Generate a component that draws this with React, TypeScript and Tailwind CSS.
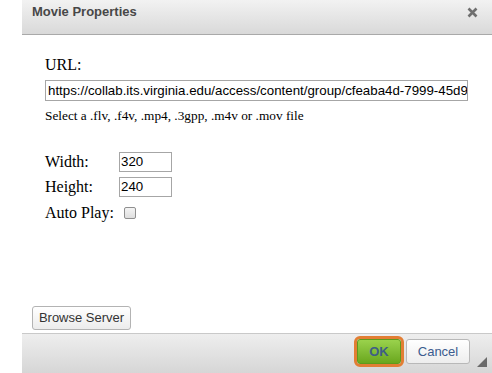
import React from "react";

export default function App() {
  const arial = { fontFamily: '"Liberation Sans", Arial, sans-serif' };
  const serif = { fontFamily: '"Liberation Serif", "Times New Roman", serif' };
  return (
    <div className="flex h-[373px] w-[492px] overflow-hidden bg-white">
      <div className="w-[22px] shrink-0" />
      <div className="flex flex-1 flex-col">
        <div
          className="flex h-[35px] shrink-0 items-start justify-between border-b border-[#a9a9a9] bg-gradient-to-b from-[#f2f2f2] to-[#d9d9d9] pl-[10px] pr-[14px] pt-[4px]"
          style={arial}
        >
          <span className="text-[13px] font-bold leading-[16px] text-[#474747]">Movie Properties</span>
          <svg width="11" height="11" viewBox="0 0 11 11" className="mt-[3px]">
            <path d="M1.5 1.5 L9.5 9.5 M9.5 1.5 L1.5 9.5" stroke="#6f6f6f" strokeWidth="2.6" strokeLinecap="butt" />
          </svg>
        </div>
        <div className="flex flex-1 flex-col pl-[10px] pt-[21px]">
          <div className="flex flex-col pl-[13px]" style={serif}>
            <div className="text-[16px] leading-[18px] text-black">URL:</div>
            <div
              className="mt-[6px] h-[21px] w-[423px] overflow-hidden whitespace-nowrap border border-[#a6a6a6] pl-[2px] text-[13.3px] leading-[19px] text-black"
              style={arial}
            >
              https://collab.its.virginia.edu/access/content/group/cfeaba4d-7999-45d9
            </div>
            <div className="mt-[7px] text-[13.3px] leading-[15px] text-black">
              Select a .flv, .f4v, .mp4, .3gpp, .m4v or .mov file
            </div>
            <div className="mt-[29px] flex h-[20px] items-center">
              <span className="w-[74px] text-[16px] leading-[18px]">Width:</span>
              <div className="h-[20px] w-[53px] border border-[#a6a6a6] pl-[1px] text-[13.3px] leading-[18px]" style={arial}>320</div>
            </div>
            <div className="mt-[5px] flex h-[20px] items-center">
              <span className="w-[74px] text-[16px] leading-[18px]">Height:</span>
              <div className="h-[20px] w-[53px] border border-[#a6a6a6] pl-[1px] text-[13.3px] leading-[18px]" style={arial}>240</div>
            </div>
            <div className="mt-[6px] flex h-[20px] items-center">
              <span className="text-[16px] leading-[18px]">Auto Play:</span>
              <div className="ml-[10px] h-[12px] w-[12px] rounded-[2px] border border-[#8f8f8f] bg-gradient-to-b from-[#f4f4f4] to-[#dedede]" />
            </div>
          </div>
          <div className="mb-[3px] mt-auto">
            <div
              className="flex h-[24px] w-[99px] items-center justify-center rounded-[3px] border border-[#b3b3b3] bg-gradient-to-b from-[#ffffff] to-[#ececec] text-[13px] text-[#333]"
              style={arial}
            >
              Browse Server
            </div>
          </div>
        </div>
        <div className="relative flex h-[40px] shrink-0 items-start justify-end border-t border-[#c9c9c9] bg-gradient-to-b from-[#eeeeee] to-[#d6d6d6] pr-[22px] pt-[2px]" style={arial}>
          <div className="flex h-[31px] items-center gap-[2px]">
            <div className="flex h-[31px] w-[50px] items-center justify-center rounded-[6px] border-[3px] border-[#e27e34]">
              <div className="flex h-full w-full items-center justify-center rounded-[3px] border border-[#5f9a1c] bg-gradient-to-b from-[#9ad24c] to-[#6aa71c] text-[13px] font-bold text-[#3e5e86]">
                OK
              </div>
            </div>
            <div className="flex h-[25px] w-[64px] items-center justify-center rounded-[3px] border border-[#b8b8b8] bg-gradient-to-b from-[#ffffff] to-[#ededed] text-[13px] text-[#3b5c8f]">
              Cancel
            </div>
          </div>
          <svg width="10" height="10" viewBox="0 0 10 10" className="absolute bottom-[6px] right-[5px]">
            <path d="M10 0 L10 10 L0 10 Z" fill="#6a6a6a" />
          </svg>
        </div>
      </div>
    </div>
  );
}
